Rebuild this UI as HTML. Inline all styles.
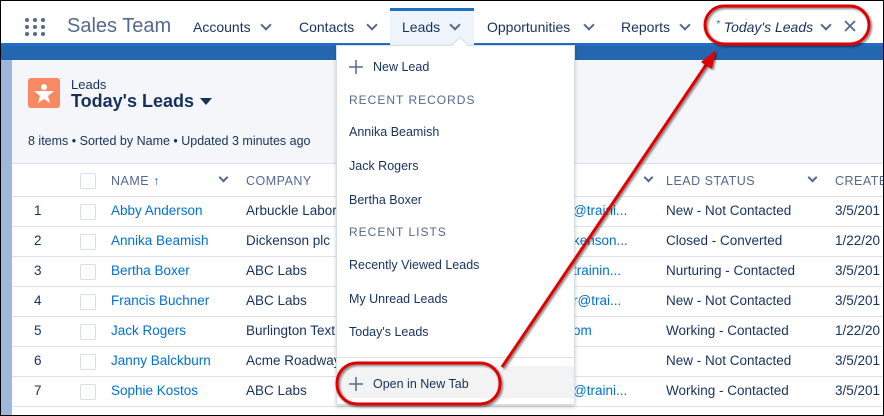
<!DOCTYPE html>
<html><head><style>
*{margin:0;padding:0;box-sizing:border-box}
body{width:884px;height:416px;overflow:hidden;font-family:"Liberation Sans",sans-serif;background:#fff;position:relative;color:#16325c}
.abs{position:absolute}
.nav{left:0;top:0;width:884px;height:46px;background:#fff;border-bottom:3px solid #1f6fc4}
.nt{position:absolute;top:19px;font-size:14px;color:#16325c;white-space:nowrap}
.chev{position:absolute;width:8px;height:8px;border-right:2px solid #54698d;border-bottom:2px solid #54698d;transform:rotate(45deg)}
.band{left:0;top:46px;width:884px;height:370px;background:#2566b0}
.card{left:12px;top:60px;width:872px;height:356px;background:#f4f6f9}
.row{position:absolute;left:12px;width:872px;height:30px;border-top:1px solid #dde1e6;background:#fff;font-size:13.5px;color:#16325c}
.row span{position:absolute;top:6px;white-space:nowrap}
.cb{position:absolute;left:68px;top:7px;width:16px;height:16px;border:1px solid #d8dde6;background:#fff;border-radius:2px}
.lk{color:#0070d2}
.dd{left:336px;top:45px;width:239px;height:360px;background:#fff;border:1px solid #d8dde6;box-shadow:0 2px 4px rgba(0,0,0,.2)}
.di{position:absolute;left:12px;font-size:12.5px;color:#16325c;white-space:nowrap}
.dh{position:absolute;left:12px;font-size:12px;color:#54698d;letter-spacing:1px}
</style></head><body>
<div class="abs nav"></div>
<div class="abs" style="left:24px;top:17px;width:22px;height:20px">
<svg width="22" height="20"><g fill="#54698d"><circle cx="3" cy="3" r="2"/><circle cx="11" cy="3" r="2"/><circle cx="19" cy="3" r="2"/><circle cx="3" cy="10" r="2"/><circle cx="11" cy="10" r="2"/><circle cx="19" cy="10" r="2"/><circle cx="3" cy="17" r="2"/><circle cx="11" cy="17" r="2"/><circle cx="19" cy="17" r="2"/></g></svg></div>
<div class="nt" style="left:67px;top:15px;font-size:20px;color:#54698d">Sales Team</div>
<div class="nt" style="left:193px">Accounts</div><div class="chev" style="left:262px;top:21px"></div>
<div class="nt" style="left:299px">Contacts</div><div class="chev" style="left:368px;top:21px"></div>
<div class="abs" style="left:390px;top:8px;width:84px;height:38px;background:#eef4fb;border-top:3px solid #1f6fc4"></div>
<div class="nt" style="left:402px">Leads</div><div class="chev" style="left:451px;top:21px"></div>
<div class="nt" style="left:487px">Opportunities</div><div class="chev" style="left:585px;top:21px"></div>
<div class="nt" style="left:621px">Reports</div><div class="chev" style="left:681px;top:21px"></div>
<div class="nt" style="left:716px;font-style:italic"><span style="color:#1f6fc4;font-size:10px;vertical-align:top">*</span> Today's Leads</div>
<div class="chev" style="left:822px;top:21px"></div>
<svg class="abs" style="left:844px;top:20px" width="12" height="12"><path d="M1 1L11 11M11 1L1 11" stroke="#54698d" stroke-width="1.8"/></svg>
<div class="abs band"></div>
<div class="abs" style="left:0;top:60px;width:12px;height:356px;background:#9db8dc"></div>
<div class="abs card"></div>
<div class="abs" style="left:28px;top:78px;width:32px;height:30px;background:#f88962;border-radius:3px"><svg width="32" height="30"><circle cx="16" cy="9" r="3" fill="#fff"/><path d="M6 13 L26 13 L20 18 L22 25 L16 21 L10 25 L12 18 Z" fill="#fff"/></svg></div>
<div class="abs" style="left:71px;top:77px;font-size:13px;color:#16325c">Leads</div>
<div class="abs" style="left:71px;top:91px;font-size:18px;font-weight:bold;color:#16325c">Today's Leads</div>
<div class="abs" style="left:200px;top:98px;width:0;height:0;border-left:6px solid transparent;border-right:6px solid transparent;border-top:7px solid #16325c"></div>
<div class="abs" style="left:28px;top:134px;font-size:12.5px;color:#16325c">8 items • Sorted by Name • Updated 3 minutes ago</div>
<div class="row" style="top:163px;height:33px;border-top:1px solid #dde1e6"><div class="cb" style="top:9px"></div>
<span style="left:99px;top:10px;font-size:12.5px;color:#54698d;letter-spacing:.5px">NAME <b style="color:#1f6fc4">↑</b></span><div class="chev" style="left:208px;top:10px;width:7px;height:7px"></div>
<span style="left:234px;top:10px;font-size:12.5px;color:#54698d;letter-spacing:.5px">COMPANY</span>
<div class="chev" style="left:633px;top:10px;width:7px;height:7px"></div>
<span style="left:654px;top:10px;font-size:12.5px;color:#54698d;letter-spacing:.5px">LEAD STATUS</span><div class="chev" style="left:797px;top:10px;width:7px;height:7px"></div>
<span style="left:823px;top:10px;font-size:12.5px;color:#54698d;letter-spacing:.5px">CREATE</span></div>
<div class="row" style="top:196px"><span style="left:22px">1</span><div class="cb"></div><span class="lk" style="left:99px">Abby Anderson</span><span style="left:234px">Arbuckle Labor</span><span class="lk" style="left:561px">@traini...</span><span style="left:654px">New - Not Contacted</span><span style="left:823px">3/5/201</span></div>
<div class="row" style="top:226px"><span style="left:22px">2</span><div class="cb"></div><span class="lk" style="left:99px">Annika Beamish</span><span style="left:234px">Dickenson plc</span><span class="lk" style="left:561px">kenson...</span><span style="left:654px">Closed - Converted</span><span style="left:823px">1/22/20</span></div>
<div class="row" style="top:256px"><span style="left:22px">3</span><div class="cb"></div><span class="lk" style="left:99px">Bertha Boxer</span><span style="left:234px">ABC Labs</span><span class="lk" style="left:561px">trainin...</span><span style="left:654px">Nurturing - Contacted</span><span style="left:823px">3/5/201</span></div>
<div class="row" style="top:286px"><span style="left:22px">4</span><div class="cb"></div><span class="lk" style="left:99px">Francis Buchner</span><span style="left:234px">ABC Labs</span><span class="lk" style="left:561px">r@trai...</span><span style="left:654px">New - Not Contacted</span><span style="left:823px">3/5/201</span></div>
<div class="row" style="top:316px"><span style="left:22px">5</span><div class="cb"></div><span class="lk" style="left:99px">Jack Rogers</span><span style="left:234px">Burlington Text</span><span class="lk" style="left:561px">om</span><span style="left:654px">Working - Contacted</span><span style="left:823px">1/22/20</span></div>
<div class="row" style="top:346px"><span style="left:22px">6</span><div class="cb"></div><span class="lk" style="left:99px">Janny Balckburn</span><span style="left:234px">Acme Roadway</span><span style="left:654px">New - Not Contacted</span><span style="left:823px">3/5/201</span></div>
<div class="row" style="top:376px;height:40px"><span style="left:22px">7</span><div class="cb"></div><span class="lk" style="left:99px">Sophie Kostos</span><span style="left:234px">ABC Labs</span><span class="lk" style="left:561px">@traini...</span><span style="left:654px">Working - Contacted</span><span style="left:823px">3/5/201</span></div>
<div class="abs" style="left:12px;top:406px;width:872px;border-top:1px solid #dde1e6"></div>
<div class="abs dd">
<svg class="abs" style="left:12px;top:14px" width="14" height="14"><path d="M7 0V14M0 7H14" stroke="#54698d" stroke-width="1.5"/></svg><div class="di" style="left:36px;top:14px">New Lead</div>
<div class="dh" style="top:47px">RECENT RECORDS</div>
<div class="di" style="top:79px">Annika Beamish</div>
<div class="di" style="top:113px">Jack Rogers</div>
<div class="di" style="top:147px">Bertha Boxer</div>
<div class="dh" style="top:179px">RECENT LISTS</div>
<div class="di" style="top:212px">Recently Viewed Leads</div>
<div class="di" style="top:246px">My Unread Leads</div>
<div class="di" style="top:279px">Today's Leads</div>
<div class="abs" style="left:0;top:311px;width:237px;border-top:1px solid #dde1e6"></div>
<div class="abs" style="left:0;top:320px;width:237px;height:32px;background:#f3f3f3"></div>
<svg class="abs" style="left:12px;top:331px" width="14" height="14"><path d="M7 0V14M0 7H14" stroke="#54698d" stroke-width="1.5"/></svg><div class="di" style="left:36px;top:331px">Open in New Tab</div>
</div>
<div class="abs" style="left:454px;top:39px;width:12px;height:12px;background:#fff;border-left:1px solid #d8dde6;border-top:1px solid #d8dde6;transform:rotate(45deg)"></div>
<svg class="abs" style="left:0;top:0" width="884" height="416">
<defs><filter id="s"><feDropShadow dx="1.5" dy="1.5" stdDeviation="1" flood-opacity=".5"/></filter></defs>
<g filter="url(#s)" fill="none" stroke="#e00000" stroke-width="3">
<rect x="705" y="6" width="164" height="38" rx="19"/>
<rect x="337" y="363" width="163" height="41" rx="20"/>
<line x1="502" y1="367" x2="708" y2="62"/>
</g>
<polygon points="716,50 701,62 712,69" fill="#e00000" filter="url(#s)"/>
</svg>
<div class="abs" style="left:0;top:0;width:884px;height:416px;border:1.5px solid #000"></div>
</body></html>
